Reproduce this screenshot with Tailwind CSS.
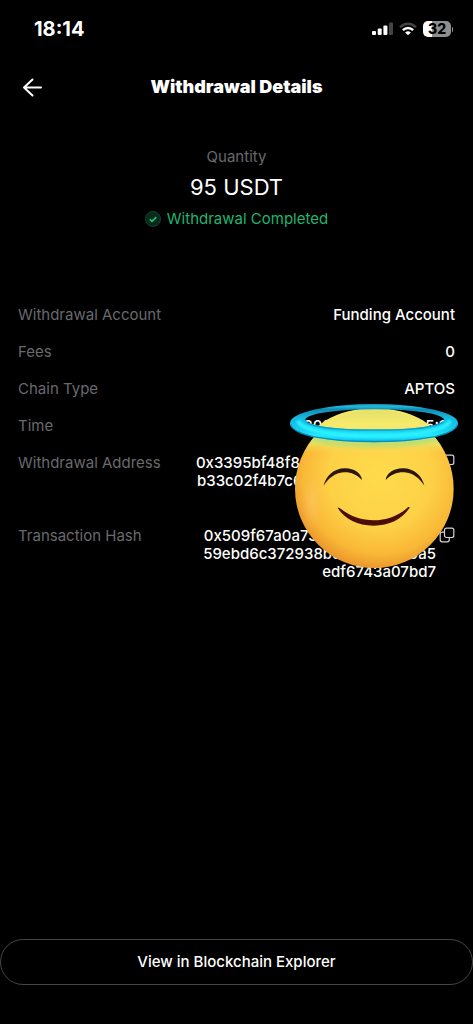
<!DOCTYPE html>
<html lang="en">
<head>
    <meta charset="UTF-8">
    <meta name="viewport" content="width=device-width, initial-scale=1.0">
    <title>Withdrawal Details</title>
    <script src="https://cdn.jsdelivr.net/npm/@tailwindcss/browser@4"></script>
</head>
<body class="bg-black text-white font-[Inter,sans-serif] text-[15px] min-h-screen flex flex-col">
    <!-- Status bar -->
    <div class="flex items-center justify-between pl-[34px] pr-5 pt-4">
        <span class="text-xl leading-[26px] font-bold">18:14</span>
        <div class="flex items-center gap-[6px]">
            <svg class="w-[21px] h-[14px]" viewBox="0 0 21 14" fill="#fff" aria-hidden="true">
                <rect x="0" y="9" width="4" height="4" rx="1"/>
                <rect x="5.7" y="6.5" width="4" height="6.5" rx="1"/>
                <rect x="11.4" y="3.5" width="4" height="9.5" rx="1"/>
                <rect x="17" y="0.5" width="4" height="12.5" rx="1" fill="#444"/>
            </svg>
            <svg class="w-[18px] h-[14px]" viewBox="0 0 18 14" fill="none" aria-hidden="true">
                <path d="M1 5.2C5.5.6 12.5.6 17 5.2" stroke="#444" stroke-width="2.4"/>
                <path d="M3.9 8.2C6.8 5.3 11.2 5.3 14.1 8.2" stroke="#fff" stroke-width="2.4"/>
                <path d="M9 13.3 6.1 10.4Q9 8 11.9 10.4Z" fill="#fff"/>
            </svg>
            <div class="flex items-center gap-px">
                <div class="w-7 h-4 rounded-[5px] bg-linear-to-r from-white from-32% to-[#8e8e8e] to-32% text-black text-[14px] leading-4 font-extrabold text-center">32</div>
                <div class="w-px h-[5px] rounded-r bg-[#8e8e8e]"></div>
            </div>
        </div>
    </div>

    <!-- Header -->
    <header class="grid grid-cols-[24px_1fr_24px] items-center px-5 pt-8">
        <button type="button" aria-label="Back">
            <svg class="w-6 h-6" viewBox="0 0 24 24" fill="none" stroke="#fff" stroke-width="2" stroke-linecap="round" stroke-linejoin="round">
                <path d="M21 12.5H4M12.5 4.5 4 12.5l8.5 8"/>
            </svg>
        </button>
        <h1 class="text-lg leading-[26px] font-black text-center">Withdrawal Details</h1>
    </header>

    <!-- Amount -->
    <section class="flex flex-col items-center pt-[47px]">
        <p class="leading-5 text-[#69696e]">Quantity</p>
        <p class="text-[22px] leading-7 mt-[6px]">95 USDT</p>
        <p class="flex items-center gap-[6px] leading-5 mt-2 text-[#1fb571]">
            <svg class="w-4 h-4" viewBox="0 0 16 16" fill="none" aria-hidden="true">
                <circle cx="8" cy="8" r="7.5" fill="#082a1b" stroke="#15432f"/>
                <path d="M4.7 8.2 7 10.4l4.3-4.3" stroke="#25c47c" stroke-width="1.5"/>
            </svg>
            Withdrawal Completed
        </p>
    </section>

    <!-- Details -->
    <section class="relative mt-[77px] px-[18px]">
        <dl class="flex flex-col gap-[19px] leading-[18px]">
            <div class="flex justify-between">
                <dt class="text-[#69696e]">Withdrawal Account</dt>
                <dd class="font-medium">Funding Account</dd>
            </div>
            <div class="flex justify-between">
                <dt class="text-[#69696e]">Fees</dt>
                <dd class="font-medium">0</dd>
            </div>
            <div class="flex justify-between">
                <dt class="text-[#69696e]">Chain Type</dt>
                <dd class="font-medium">APTOS</dd>
            </div>
            <div class="flex justify-between">
                <dt class="text-[#69696e]">Time</dt>
                <dd class="font-medium">2025-04-20 17:05:10</dd>
            </div>
            <div class="flex justify-between">
                <dt class="text-[#69696e]">Withdrawal Address</dt>
                <dd class="flex items-start gap-[3px] text-right font-medium">
                    <span>0x3395bf48f8a05c7e92d24b6a5<br>b33c02f4b7c60e8a25d93f4c26a<br>a6d04c81e57b</span>
                    <button type="button" aria-label="Copy address">
                        <svg class="w-4 h-4" viewBox="0 0 16 16" fill="none" stroke="#d4d4d4" stroke-width="1.2">
                            <rect x="5.5" y="1.2" width="9.3" height="9.3" rx="2"/>
                            <path d="M5.5 5.2H3.2a2 2 0 0 0-2 2v5.6a2 2 0 0 0 2 2h5.1a2 2 0 0 0 2-2v-2.3"/>
                        </svg>
                    </button>
                </dd>
            </div>
            <div class="flex justify-between">
                <dt class="text-[#69696e]">Transaction Hash</dt>
                <dd class="flex items-start gap-[3px] text-right font-medium">
                    <span>0x509f67a0a73c18e4b21d5f0c7<br>59ebd6c372938bd41e7f60d0a5<br>edf6743a07bd7</span>
                    <button type="button" aria-label="Copy transaction hash">
                        <svg class="w-4 h-4" viewBox="0 0 16 16" fill="none" stroke="#d4d4d4" stroke-width="1.2">
                            <rect x="5.5" y="1.2" width="9.3" height="9.3" rx="2"/>
                            <path d="M5.5 5.2H3.2a2 2 0 0 0-2 2v5.6a2 2 0 0 0 2 2h5.1a2 2 0 0 0 2-2v-2.3"/>
                        </svg>
                    </button>
                </dd>
            </div>
        </dl>

        <!-- Halo emoji sticker -->
        <svg class="absolute top-[98px] right-[15px] w-[168px] h-[165px]" viewBox="30 42 504 495" fill="none" aria-hidden="true">
            <defs>
                <radialGradient id="face" cx="0.54" cy="0.42" r="0.6">
                    <stop offset="0" stop-color="#ffdc4c"/>
                    <stop offset="0.55" stop-color="#fdd046"/>
                    <stop offset="0.82" stop-color="#f9b837"/>
                    <stop offset="1" stop-color="#e8922b"/>
                </radialGradient>
                <linearGradient id="crown" x1="0" y1="56" x2="0" y2="190" gradientUnits="userSpaceOnUse">
                    <stop offset="0" stop-color="#e3e06a"/>
                    <stop offset="0.35" stop-color="#f7ea6c"/>
                    <stop offset="0.75" stop-color="#e6e266"/>
                    <stop offset="1" stop-color="#ffd94a" stop-opacity="0"/>
                </linearGradient>
                <radialGradient id="cheek">
                    <stop offset="0" stop-color="#ffcf8e" stop-opacity="0.35"/>
                    <stop offset="1" stop-color="#ffc070" stop-opacity="0"/>
                </radialGradient>
                <linearGradient id="halo" x1="0" y1="42" x2="0" y2="157" gradientUnits="userSpaceOnUse">
                    <stop offset="0" stop-color="#1199c4"/>
                    <stop offset="0.07" stop-color="#20b9dd"/>
                    <stop offset="0.14" stop-color="#118bb4"/>
                    <stop offset="0.35" stop-color="#14b8e0"/>
                    <stop offset="0.7" stop-color="#16d0ee"/>
                    <stop offset="0.82" stop-color="#22ebff"/>
                    <stop offset="0.93" stop-color="#14c9ee"/>
                    <stop offset="1" stop-color="#0792c6"/>
                </linearGradient>
                <clipPath id="faceClip"><circle cx="283" cy="296" r="238"/></clipPath>
                <clipPath id="ringClip"><ellipse cx="282" cy="99.5" rx="252" ry="57.5"/></clipPath>
                <filter id="soft" x="-20%" y="-50%" width="140%" height="200%"><feGaussianBlur stdDeviation="8"/></filter>
                <filter id="shine" x="-20%" y="-50%" width="140%" height="200%"><feGaussianBlur stdDeviation="3"/></filter>
            </defs>
            <circle cx="283" cy="296" r="238" fill="url(#face)"/>
            <g clip-path="url(#ringClip)">
                <ellipse cx="283" cy="180" rx="205" ry="126" fill="#f2e768"/>
            </g>
            <g clip-path="url(#faceClip)">
                <rect x="30" y="56" width="504" height="134" fill="url(#crown)"/>
                <path d="M65 128C130 174 435 174 500 128" stroke="#a9dc78" stroke-width="14" filter="url(#soft)"/>
                <ellipse cx="96" cy="335" rx="34" ry="90" fill="url(#cheek)"/>
            </g>
            <path fill="url(#halo)" fill-rule="evenodd" d="M30 99.5a252 57.5 0 1 0 504 0a252 57.5 0 1 0-504 0ZM76 89a208 31 0 1 1 416 0a208 31 0 1 1-416 0Z"/>
            <path d="M78 95C96 112 180 120 284 120S472 112 490 95" stroke="#0b9fca" stroke-width="4"/>
            <path d="M32 104C44 138 152 155 282 155S520 138 532 104" stroke="#0890c2" stroke-width="4"/>
            <path d="M54 92C62 122 168 138 282 138S502 122 510 92" stroke="#2af0ff" stroke-width="13" filter="url(#shine)"/>
            <path d="M131 287C137 259 161 235 195 235C225 235 244 251 246 270C230 254 213 246 191 247C165 249 145 265 131 287Z" fill="#2b160a"/>
            <path d="M433 287C427 259 403 235 369 235C339 235 319 251 317 270C333 254 351 246 373 247C399 249 419 265 433 287Z" fill="#2b160a"/>
            <path d="M173 354C176 352 180 354 184 358C240 402 325 402 379 356C383 351 388 349 389 353C367 388 327 407 281 407C233 407 195 388 173 354Z" fill="#4b0d06"/>
        </svg>
    </section>

    <!-- Footer action -->
    <div class="mt-auto pb-[39px]">
        <button type="button" class="w-full h-[46px] rounded-full border border-[#454545] font-medium">View in Blockchain Explorer</button>
    </div>
</body>
</html>
